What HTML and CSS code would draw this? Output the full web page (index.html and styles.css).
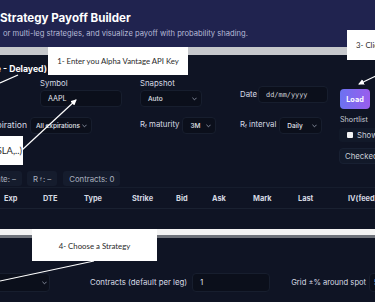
FILE: index.html
```html
<!DOCTYPE html>
<html lang="en">
<head>
<meta charset="utf-8">
<title>Strategy Payoff Builder</title>
<link rel="stylesheet" href="styles.css">
</head>
<body>
<div class="page">
  <header class="hero">
    <h1 class="title">Strategy Payoff Builder</h1>
    <p class="subtitle">or multi-leg strategies, and visualize payoff with probability shading.</p>
  </header>
  <div class="strip"></div>

  <section class="panel">
    <h2 class="panel-title"><span>(Alpha Vantage - Delayed)</span></h2>

    <div class="controls">
      <div class="cell cell-symbol">
        <div class="lbl">Symbol</div>
        <div class="field w-symbol">AAPL</div>
      </div>
      <div class="cell">
        <div class="lbl">Snapshot</div>
        <div class="select w-snap"><span>Auto</span><svg class="chev" viewBox="0 0 6 4"><path d="M.5.5 3 3 5.5.5"/></svg></div>
      </div>
      <div class="cell cell-date">
        <div class="lbl-inline">Date</div>
        <div class="field date w-date">dd/mm/yyyy</div>
      </div>
      <div class="cell">
        <button class="btn-load">Load</button>
      </div>

      <div class="cell row2">
        <div class="crop-left w-explabel"><span class="lbl-inline lbl-exp">Expiration</span></div>
        <div class="select w-exp"><span>All expirations</span><svg class="chev" viewBox="0 0 6 4"><path d="M.5.5 3 3 5.5.5"/></svg></div>
      </div>
      <div class="cell row2">
        <div class="lbl-inline">R<sub>f</sub> maturity</div>
        <div class="select w-mat"><span>3M</span><svg class="chev" viewBox="0 0 6 4"><path d="M.5.5 3 3 5.5.5"/></svg></div>
      </div>
      <div class="cell row2">
        <div class="lbl-inline">R<sub>f</sub> interval</div>
        <div class="select w-int"><span>Daily</span><svg class="chev" viewBox="0 0 6 4"><path d="M.5.5 3 3 5.5.5"/></svg></div>
      </div>
      <div class="cell shortlist">
        <div class="lbl-small">Shortlist</div>
        <label class="show-chip"><span class="box"></span><span>Show</span></label>
        <button class="btn-checked">Checked</button>
      </div>
    </div>

    <div class="chips">
      <div class="crop-left w-chip1"><span class="chip">Date: –</span></div>
      <span class="chip chip-rf">R<sub>f</sub> : –</span>
      <span class="chip">Contracts: 0</span>
    </div>

    <div class="table">
      <div class="thead">
        <span>Exp</span><span>DTE</span><span>Type</span><span>Strike</span><span>Bid</span><span>Ask</span><span>Mark</span><span>Last</span><span>IV(feed)</span>
      </div>
    </div>
  </section>

  <div class="band"></div>

  <section class="panel2">
    <div class="row-bottom">
      <div class="crop-left w-strat"><div class="select w-stratsel"><span>Long Call</span><svg class="chev" viewBox="0 0 6 4"><path d="M.5.5 3 3 5.5.5"/></svg></div></div>
      <div class="lbl-inline lbl-contracts">Contracts (default per leg)</div>
      <div class="field w-contracts">1</div>
      <div class="lbl-inline lbl-grid">Grid ±% around spot</div>
      <div class="field w-grid">5</div>
    </div>
  </section>

  <!-- annotation overlays -->
  <div class="callout c1">1- Enter you Alpha Vantage API Key</div>
  <div class="callout c2">Ticker (AAPL, TSLA,..)</div>
  <div class="callout c3">3- Click Load</div>
  <div class="callout c4">4- Choose a Strategy</div>
  <svg class="arrows" viewBox="0 0 375 302" width="375" height="302">
    <defs>
      <marker id="head" viewBox="0 0 6 6" refX="5" refY="3" markerWidth="5" markerHeight="5" orient="auto">
        <path d="M0 0 6 3 0 6z" fill="#fff"/>
      </marker>
    </defs>
    <line x1="0" y1="83" x2="18" y2="75"/>
    <line x1="22" y1="150" x2="76" y2="100" marker-end="url(#head)"/>
    <line x1="378" y1="75" x2="359" y2="84" marker-end="url(#head)"/>
    <line x1="0" y1="281" x2="94" y2="261"/>
  </svg>
</div>
</body>
</html>
```

FILE: styles.css
```css
* { box-sizing: border-box; margin: 0; padding: 0; }
html, body { width: 375px; height: 302px; overflow: hidden; background: #0f1424; }
body { font-family: Inter, "Noto Sans", sans-serif; color: #d7dbe4; }
.page { position: relative; width: 375px; height: 302px; overflow: hidden; }

.hero { height: 47px; background: #20234f; padding-top: 11px; }
.title { font-size: 11.6px; font-weight: 700; color: #ffffff; line-height: 14px; }
.subtitle { font-size: 7.6px; color: #b6bad6; line-height: 9px; margin-top: 4px; padding-left: 3px; white-space: nowrap; }

.strip { height: 8px; background: #c6c8cc; }

.panel { height: 174px; background: #0f1424; padding-top: 9px; }
.panel-title { display: flex; justify-content: flex-end; width: 47px; white-space: nowrap; font-size: 8.7px; font-weight: 700; color: #ffffff; line-height: 10px; }

.controls { display: grid; grid-template-columns: 140px 100px 100px 35px; row-gap: 8px; margin-top: 5px; }
.cell { display: flex; flex-direction: column; align-items: flex-start; }
.cell-symbol { padding-left: 40px; }
.lbl { font-size: 7.8px; line-height: 9px; margin-bottom: 2px; color: #d7dbe4; white-space: nowrap; }
.lbl-inline { font-size: 7.8px; line-height: 9px; color: #d7dbe4; white-space: nowrap; flex: none; }
.lbl-exp { font-size: 8.6px; }
.lbl-inline sub, .chip sub { font-size: 5px; vertical-align: -1px; }
.lbl-small { font-size: 7.2px; line-height: 8px; color: #c9cdd6; white-space: nowrap; margin-top: -1px; }

.field { flex: none; height: 17px; display: flex; align-items: center; padding-left: 7px; background: #0b0f1b; border: 1px solid #171e2e; border-radius: 4px; font-size: 7.2px; color: #e4e7ee; }
.w-symbol { width: 82px; }
.cell-date { flex-direction: row; align-items: center; margin-top: 1px; gap: 1px; }
.date { font-family: "DejaVu Sans Mono", monospace; font-size: 6.9px; color: #d0d3da; }
.w-date { width: 70px; }

.select { flex: none; height: 17px; display: flex; align-items: center; justify-content: space-between; padding: 0 4px 0 7px; background: #0b0f1b; border: 1px solid #171e2e; border-radius: 4px; font-size: 6.5px; font-weight: 500; color: #e2e5ec; white-space: nowrap; }
.chev { width: 5px; height: 4px; fill: none; stroke: #9aa2b2; stroke-width: 1; flex: none; }
.w-snap { width: 62px; }
.w-exp { width: 62px; padding-left: 5px; }
.w-mat { width: 34px; }
.w-int { width: 43px; }

.btn-load { margin-top: 10px; width: 30px; height: 20px; border: 0; border-radius: 4px; background: linear-gradient(90deg, #6b72f1, #9a5ded); color: #fff; font-family: inherit; font-size: 7.3px; font-weight: 700; }

.row2 { flex-direction: row; align-items: center; height: 17px; gap: 3px; }
.crop-left { display: flex; justify-content: flex-end; white-space: nowrap; flex: none; }
.w-explabel { width: 27px; }

.show-chip { display: flex; align-items: center; gap: 4px; margin-top: 4px; margin-left: -1px; height: 14px; padding: 0 4px 0 8px; background: #121929; border-radius: 3px; font-size: 7.8px; color: #c9cdd6; }
.show-chip .box { width: 6px; height: 6px; background: #f2f3f5; border-radius: 1px; }
.btn-checked { margin-top: 6px; margin-left: -1px; height: 16px; padding: 0 5px; background: #121929; border: 1px solid #182032; border-radius: 4px; color: #c9cdd6; font-family: inherit; font-size: 7.8px; white-space: nowrap; text-align: left; }

.chips { display: flex; gap: 6px; margin-top: 7px; height: 15px; }
.chip { flex: none; display: flex; align-items: center; height: 15px; padding: 0 6px; background: #151c2d; border-radius: 3px; font-size: 7.8px; color: #aab1bf; white-space: nowrap; }
.chip-rf { margin-left: -1px; }
.chip-rf sub { margin-left: 2px; margin-right: 1px; }
.w-chip1 { width: 22px; }

.table { margin-top: 1px; border-top: 1px solid #161d2d; }
.thead { display: grid; grid-template-columns: 39px 41px 48px 44px 36px 41px 45px 50px 1fr; height: 21px; align-items: center; border-bottom: 1px solid #1a2131; font-size: 7.4px; font-weight: 700; color: #d5d9e2; white-space: nowrap; }
.thead span { padding-left: 4px; }

.band { height: 9px; background: #f3f3f3; border-bottom: 3px solid #6f737b; }

.panel2 { height: 64px; background: #0f1424; padding-top: 35px; }
.row-bottom { display: flex; align-items: center; height: 19px; }
.w-strat { width: 50px; }
.w-stratsel { width: 140px; height: 19px; padding-right: 2px; }
.lbl-contracts { margin-left: 40px; }
.w-contracts { width: 78px; height: 19px; margin-left: 5px; }
.lbl-grid { margin-left: 21px; font-size: 7.6px; }
.w-grid { width: 60px; height: 19px; margin-left: 3px; padding-left: 4px; }

.callout { position: absolute; background: #ffffff; color: #2a2a2a; font-family: Lato, "Noto Sans", sans-serif; font-size: 7.8px; display: flex; align-items: center; justify-content: center; white-space: nowrap; }
.c1 { left: 48px; top: 47px; width: 140px; height: 28px; }
.c2 { left: -80px; top: 136px; width: 103px; height: 29px; justify-content: flex-end; padding-right: 1px; font-size: 9.4px; }
.c3 { left: 347px; top: 30px; width: 60px; height: 30px; justify-content: flex-start; padding-left: 9px; }
.c4 { left: 32px; top: 229px; width: 125px; height: 32px; padding-top: 2px; }

.arrows { position: absolute; left: 0; top: 0; }
.arrows line { stroke: #ffffff; stroke-width: 1.2; }
```
